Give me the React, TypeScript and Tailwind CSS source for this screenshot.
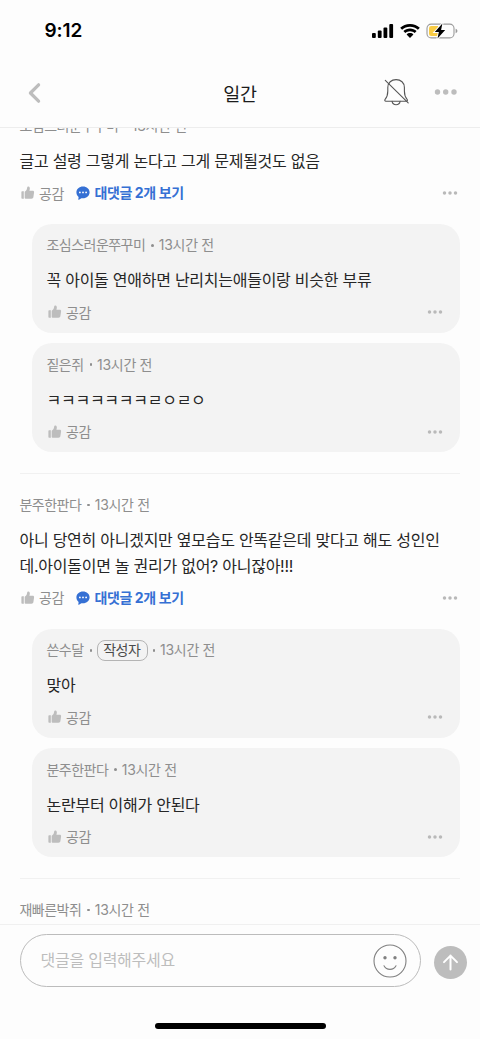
import React from 'react';
import clsx from 'clsx';

interface Reply {
  author: string;
  time: string;
  content: string;
  isWriter?: boolean;
}

interface Comment {
  author: string;
  time: string;
  lines: string[];
  replies: Reply[];
}

const comments: Comment[] = [
  {
    author: '조심스러운쭈꾸미',
    time: '13시간 전',
    lines: ['글고 설령 그렇게 논다고 그게 문제될것도 없음'],
    replies: [
      {
        author: '조심스러운쭈꾸미',
        time: '13시간 전',
        content: '꼭 아이돌 연애하면 난리치는애들이랑 비슷한 부류',
      },
      { author: '짙은쥐', time: '13시간 전', content: 'ㅋㅋㅋㅋㅋㅋㅋㄹㅇㄹㅇ' },
    ],
  },
  {
    author: '분주한판다',
    time: '13시간 전',
    lines: [
      '아니 당연히 아니겠지만 옆모습도 안똑같은데 맞다고 해도 성인인',
      '데.아이돌이면 놀 권리가 없어? 아니잖아!!!',
    ],
    replies: [
      { author: '쓴수달', time: '13시간 전', content: '맞아', isWriter: true },
      { author: '분주한판다', time: '13시간 전', content: '논란부터 이해가 안된다' },
    ],
  },
];

const ThumbIcon = () => (
  <svg width="14" height="14" viewBox="0 0 14 14" fill="#bdbdbd">
    <path d="M.4 6.1Q.4 5.3 1.2 5.3H2.8V12.7H1.2Q.4 12.7.4 11.9Z" />
    <path d="M3.7 5.7C5.1 4.9 5.9 3.6 6.1 1.9C6.2 1 6.7.4 7.4.5C8.6.7 9.1 1.9 8.8 3.3L8.4 4.7H11.6C12.7 4.7 13.2 5.4 13.1 6.3L12.4 11.1C12.2 12.3 11.6 12.8 10.5 12.8H5.5C4.7 12.8 4.1 12.6 3.7 12.2Z" />
  </svg>
);

const ReplyIcon = () => (
  <svg width="14" height="14" viewBox="0 0 14 14">
    <path
      d="M7 .4C3.3.4.4 2.9.4 6.3C.4 8.3 1.3 9.9 2.6 10.9L2.3 13.4C2.3 13.7 2.6 13.9 2.9 13.7L5.4 12.2C6 12.3 6.5 12.3 7 12.3C10.7 12.3 13.6 9.7 13.6 6.3C13.6 2.9 10.7.4 7 .4Z"
      fill="#3570d4"
    />
    <circle cx="3.9" cy="6.4" r=".9" fill="white" />
    <circle cx="7" cy="6.4" r=".9" fill="white" />
    <circle cx="10.1" cy="6.4" r=".9" fill="white" />
  </svg>
);

const MoreIcon = () => (
  <svg width="16" height="6" viewBox="0 0 16 6" fill="#b9b9b9">
    <circle cx="2.5" cy="3" r="1.75" />
    <circle cx="8" cy="3" r="1.75" />
    <circle cx="13.5" cy="3" r="1.75" />
  </svg>
);

const Meta: React.FC<{ author: string; time: string; isWriter?: boolean }> = ({
  author,
  time,
  isWriter = false,
}) => (
  <div className="flex h-5 items-center whitespace-nowrap text-[14px] leading-5 text-[#8e8e8e]">
    <span className="tracking-[-0.53px]">{author}</span>
    <span className="ml-[6px] mr-[5px] size-[2.5px] shrink-0 rounded-full bg-[#8e8e8e]" />
    {isWriter && (
      <>
        <span className="flex h-[21px] w-[50.5px] shrink-0 items-center justify-center rounded-[8px] border border-[#b4b4b4] pr-[1px] tracking-[-0.5px] text-[#4a4a4a]">
          작성자
        </span>
        <span className="mx-[5px] size-[2.5px] shrink-0 rounded-full bg-[#8e8e8e]" />
      </>
    )}
    <span className="tracking-[-0.3px]">{time}</span>
  </div>
);

const Actions: React.FC<{ replyCount?: number }> = ({ replyCount }) => (
  <div className="mt-[7px] flex h-6 items-center text-[14px] leading-6">
    <span className="ml-[1.5px]">
      <ThumbIcon />
    </span>
    <span className="ml-[4px] mt-[1px] tracking-[-0.4px] text-[#8e8e8e]">공감</span>
    {replyCount && (
      <>
        <span className="ml-[12px]">
          <ReplyIcon />
        </span>
        <span className="ml-[4.5px] font-bold tracking-[-0.4px] text-[#3570d4]">
          대댓글 {replyCount}개 보기
        </span>
      </>
    )}
    <span className="ml-auto mr-[2px]">
      <MoreIcon />
    </span>
  </div>
);

const bodyClass = 'mt-3 whitespace-nowrap text-[16px] leading-[26px] tracking-[-0.26px] text-[#262626]';

const ReplyCard: React.FC<{ reply: Reply }> = ({ reply }) => (
  <div className="h-[109px] rounded-[20px] bg-[#f3f3f3] pl-[15px] pr-[15px] pt-[11.3px]">
    <Meta author={reply.author} time={reply.time} isWriter={reply.isWriter} />
    <p className={bodyClass}>{reply.content}</p>
    <Actions />
  </div>
);

const CommentItem: React.FC<{ comment: Comment }> = ({ comment }) => (
  <section>
    <Meta author={comment.author} time={comment.time} />
    <div className={bodyClass}>
      {comment.lines.map((line) => (
        <p key={line}>{line}</p>
      ))}
    </div>
    <Actions replyCount={comment.replies.length} />
    <div className="ml-[12px] mt-[19px] flex flex-col gap-[10.4px]">
      {comment.replies.map((reply) => (
        <ReplyCard key={reply.content} reply={reply} />
      ))}
    </div>
    <div className="mb-[21.4px] mt-[20.2px] h-px bg-[#f1f1f1]" />
  </section>
);

const StatusBar = () => (
  <div className="flex h-[60px] items-center justify-between pl-[44.5px] pr-[22px]">
    <span className="mt-[2px] text-[19px] font-semibold leading-6 tracking-[-0.1px] text-black">9:12</span>
    <div className="mt-[1px] flex items-center">
      <svg width="22" height="14" viewBox="0 0 22 14">
        <rect x="0" y="9" width="3.8" height="5" rx="1" />
        <rect x="5.8" y="6.6" width="3.8" height="7.4" rx="1" />
        <rect x="11.5" y="3.6" width="3.8" height="10.4" rx="1" />
        <rect x="17.3" y="0" width="3.8" height="14" rx="1" />
      </svg>
      <svg className="ml-[6px]" width="20" height="14" viewBox="0 0 20 14">
        <path d="M10 0C13.9 0 17.3 1.4 19.8 3.8L17.9 5.8C15.8 3.8 13.1 2.7 10 2.7S4.2 3.8 2.1 5.8L.2 3.8C2.7 1.4 6.1 0 10 0Z" />
        <path d="M10 4.6C12.6 4.6 14.9 5.6 16.6 7.1L14.7 9.1C13.4 7.9 11.8 7.2 10 7.2S6.6 7.9 5.3 9.1L3.4 7.1C5.1 5.6 7.4 4.6 10 4.6Z" />
        <path d="M10 9.1C11.4 9.1 12.5 9.6 13.4 10.4L10 14L6.6 10.4C7.5 9.6 8.6 9.1 10 9.1Z" />
      </svg>
      <svg className="ml-[6px]" width="32" height="16" viewBox="0 0 32 16">
        <rect x="1" y="1.1" width="27" height="13.8" rx="4.2" fill="none" stroke="#9a9a9a" strokeWidth="1.1" />
        <path d="M29.6 5.8C30.8 6.2 31.4 7 31.4 8S30.8 9.8 29.6 10.2Z" fill="#9a9a9a" />
        <path d="M5.2 3H12V13H5.2Q3 13 3 10.8V5.2Q3 3 5.2 3Z" fill="#f9cc45" />
        <path
          d="M16.4.6L8.8 8.9H12.9L11.5 15.4L19.2 7H15.1Z"
          stroke="white"
          strokeWidth="2"
          paintOrder="stroke"
        />
      </svg>
    </div>
  </div>
);

const Header = () => (
  <header className="relative flex h-[68px] shrink-0 items-center justify-between border-b border-[#ededed] pl-[27px] pr-[22px]">
    <svg className="mb-[2px]" width="15" height="22" viewBox="0 0 15 22" fill="none">
      <path d="M11.6 2.8L3.4 11L11.6 19.2" stroke="#bdbdbd" strokeWidth="3.2" strokeLinecap="round" strokeLinejoin="round" />
    </svg>
    <h1 className="absolute inset-x-0 top-[20px] text-center text-[18.5px] font-normal leading-7 tracking-[-0.2px] text-[#1c1c1c]">
      일간
    </h1>
    <div className="mb-[2.5px] flex items-center">
      <svg width="27" height="28" viewBox="0 0 27 28" fill="none" stroke="#555" strokeWidth="1.1" strokeLinecap="round">
        <path d="M2.9 23.2C1.8 23.2 1.4 22.1 2.1 21.3C4 19.2 4.8 17 4.8 13V9.4C4.8 4.7 8.4 1.6 13.1 1.6S21.4 4.7 21.4 9.4V13C21.4 17 22.2 19.2 24.1 21.3C24.8 22.1 24.4 23.2 23.3 23.2Z" />
        <path d="M9.1 23.4C9.4 25.5 11 26.7 13.1 26.7S16.8 25.5 17.1 23.4" />
        <path d="M2.3 2.4L25.2 24.8" />
      </svg>
      <svg className="ml-[24px]" width="24" height="8" viewBox="0 0 24 8" fill="#bdbdbd">
        <circle cx="3.5" cy="4" r="2.7" />
        <circle cx="11.7" cy="4" r="2.7" />
        <circle cx="20" cy="4" r="2.7" />
      </svg>
    </div>
  </header>
);

const CommentInput = () => (
  <footer className="h-[115px] shrink-0 border-t border-[#f0f0f0] pt-[9px]">
    <div className="flex items-center pl-5 pr-[13px]">
      <div className="flex h-[53px] w-[401px] items-center justify-between rounded-full border border-[#bcbcbc] pl-[19.5px] pr-[13px]">
        <span className="mb-[1px] text-[16px] leading-6 tracking-[-0.25px] text-[#bdbdbd]">댓글을 입력해주세요</span>
        <svg width="34" height="34" viewBox="0 0 34 34" fill="none" stroke="#808080" strokeWidth="1.1" strokeLinecap="round">
          <circle cx="17" cy="17" r="16" />
          <path d="M11 21.8C12.3 24.2 14.5 25.4 17 25.4S21.7 24.2 23 21.8" />
          <circle cx="12" cy="13.8" r="1.7" fill="#808080" stroke="none" />
          <circle cx="22" cy="13.8" r="1.7" fill="#808080" stroke="none" />
        </svg>
      </div>
      <button className="ml-auto mt-[3px] flex size-[33px] items-center justify-center rounded-full bg-[#bdbdbd]">
        <svg width="17" height="17" viewBox="0 0 17 17" fill="none" stroke="white" strokeWidth="2" strokeLinecap="round" strokeLinejoin="round">
          <path d="M8.5 15.4V1.6M2 8.1L8.5 1.6L15 8.1" />
        </svg>
      </button>
    </div>
    <div className="mx-auto mt-[36px] h-[6px] w-[171px] rounded-full bg-black" />
  </footer>
);

export default function App() {
  return (
    <div
      className={clsx(
        'flex h-[1039px] w-[480px] flex-col overflow-hidden bg-[#fdfdfd]',
        "font-[Inter,'Noto_Sans_CJK_KR',sans-serif]",
      )}
    >
      <StatusBar />
      <Header />
      {/* 스크롤된 댓글 목록 */}
      <main className="min-h-0 flex-1 overflow-hidden pl-[19.5px] pr-5">
        <div className="-mt-[12px]">
          {comments.map((comment) => (
            <CommentItem key={comment.author} comment={comment} />
          ))}
          <Meta author="재빠른박쥐" time="13시간 전" />
        </div>
      </main>
      <CommentInput />
    </div>
  );
}
